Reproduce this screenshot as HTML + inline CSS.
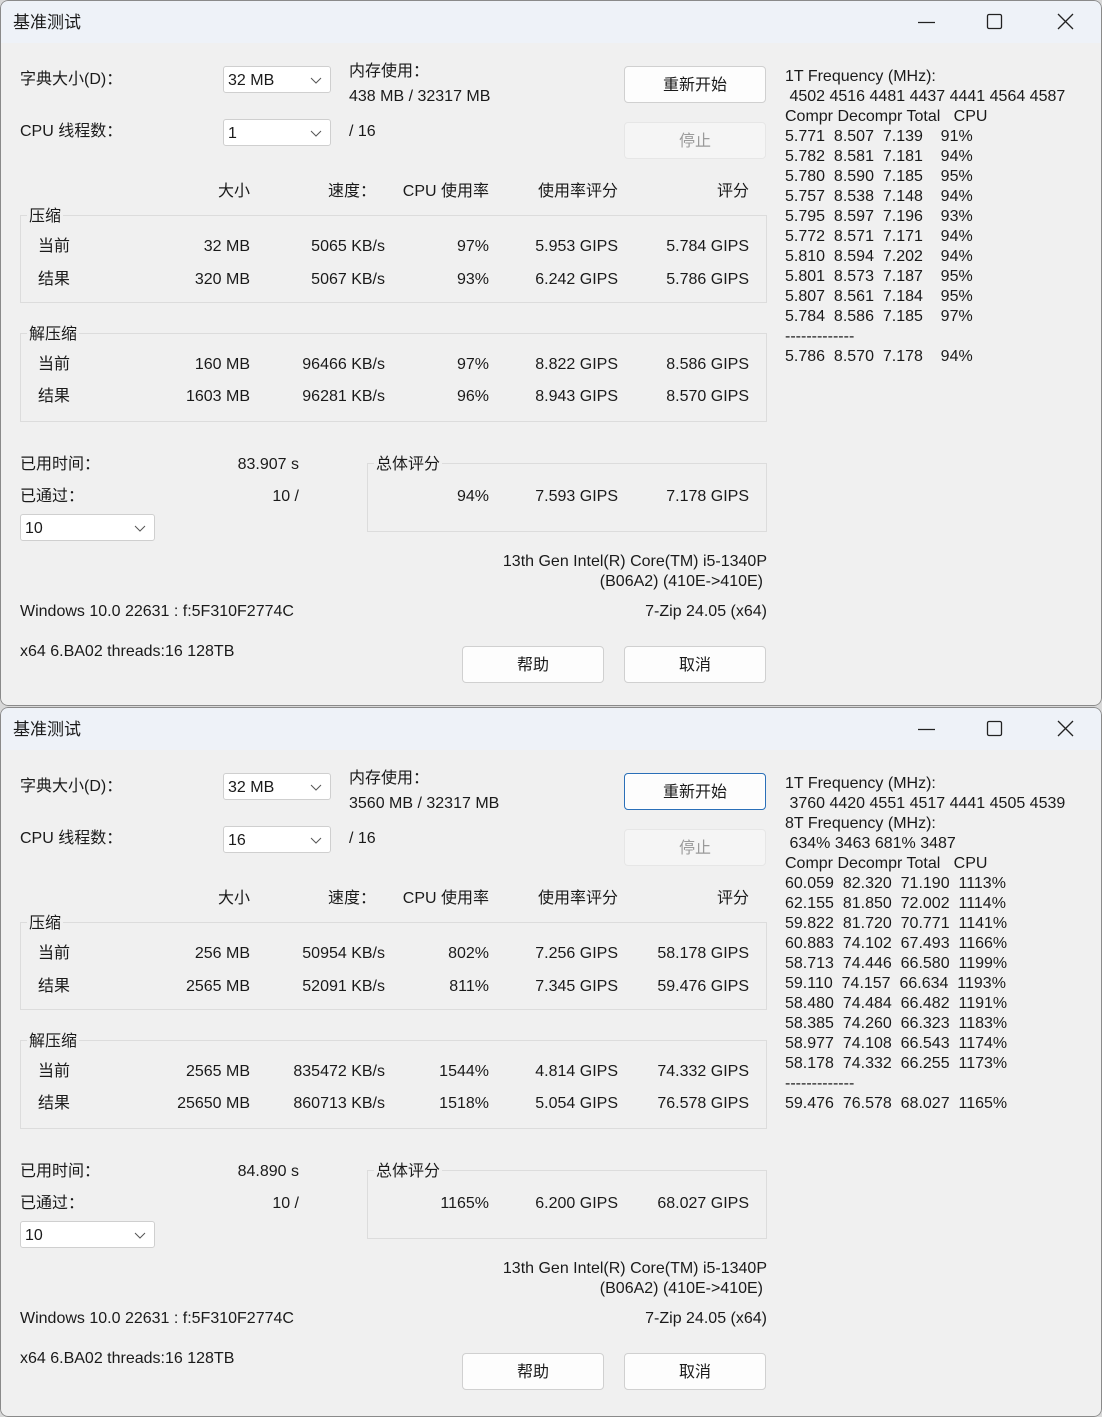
<!DOCTYPE html>
<html><head><meta charset="utf-8">
<style>
*{margin:0;padding:0;box-sizing:border-box}
body{width:1102px;height:1414px;background:#d8d8d8;position:relative;overflow:hidden;font-family:"Liberation Sans","Noto Sans CJK SC",sans-serif;font-size:16px;color:#1a1a1a}
.win{position:absolute;left:0;width:1102px;background:#f0f0f0;border-radius:8px;overflow:hidden}
.win::after{content:"";position:absolute;left:0;top:0;right:0;bottom:0;border:1px solid #8a8a8a;border-radius:8px;pointer-events:none}
.tb{position:absolute;left:0;top:0;width:100%;height:43px;background:#eef2f8}
.t,.r,.col,.gl{margin-top:2px}
.t{position:absolute;line-height:20px;white-space:pre}
.r{position:absolute;line-height:20px;white-space:pre;text-align:right;width:200px}
.title{left:13px;top:11px;font-size:17px}
.combo{position:absolute;background:#fff;border:1px solid #cfcfcf;border-radius:3px;height:27px;line-height:27px;padding-left:4px}
.combo svg{position:absolute;right:8px;top:10px}
.btn{position:absolute;width:142px;height:37px;background:#fdfdfd;border:1px solid #d0d0d0;border-radius:4px;text-align:center;line-height:37px}
.btn.dis{background:#f5f5f5;border-color:#e6e6e6;color:#9a9a9a}
.btn.def{border:1px solid #2a6fb8;box-shadow:inset 0 0 0 1px #fff}
.grp{position:absolute;border:1px solid #dcdcdc}
.gl{position:absolute;background:#f0f0f0;padding:0 2px;line-height:20px}
.ctrl{position:absolute;top:12px}
.col{position:absolute;left:785px;line-height:20px;white-space:pre}
</style></head><body>

<!-- WINDOW 1 -->
<div class="win" style="top:0;height:706px">
<div class="tb"></div>
<div class="t title">基准测试</div>
<svg class="ctrl" style="left:917px" width="20" height="20"><line x1="1" y1="10.5" x2="18" y2="10.5" stroke="#222" stroke-width="1.2"/></svg>
<svg class="ctrl" style="left:985px" width="20" height="20"><rect x="2.5" y="2.5" width="14" height="14" rx="1.5" fill="none" stroke="#222" stroke-width="1.3"/></svg>
<svg class="ctrl" style="left:1056px" width="20" height="20"><path d="M2 2L17 17M17 2L2 17" stroke="#222" stroke-width="1.3"/></svg>

<div class="t" style="left:20px;top:68px">字典大小(D)：</div>
<div class="combo" style="left:223px;top:66px;width:108px">32 MB<svg width="12" height="8"><path d="M1 1L6 6L11 1" fill="none" stroke="#555"/></svg></div>
<div class="t" style="left:349px;top:60px">内存使用：</div>
<div class="t" style="left:349px;top:85px">438 MB / 32317 MB</div>
<div class="btn" style="left:624px;top:66px">重新开始</div>
<div class="t" style="left:20px;top:120px">CPU 线程数：</div>
<div class="combo" style="left:223px;top:119px;width:108px">1<svg width="12" height="8"><path d="M1 1L6 6L11 1" fill="none" stroke="#555"/></svg></div>
<div class="t" style="left:349px;top:120px">/ 16</div>
<div class="btn dis" style="left:624px;top:122px">停止</div>

<div class="r" style="left:50px;top:180px">大小</div>
<div class="r" style="left:176px;top:180px">速度：</div>
<div class="r" style="left:289px;top:180px">CPU 使用率</div>
<div class="r" style="left:418px;top:180px">使用率评分</div>
<div class="r" style="left:549px;top:180px">评分</div>

<div class="grp" style="left:20px;top:215px;width:747px;height:88px"></div>
<div class="gl" style="left:27px;top:205px">压缩</div>
<div class="t" style="left:38px;top:235px">当前</div>
<div class="r" style="left:50px;top:235px">32 MB</div>
<div class="r" style="left:185px;top:235px">5065 KB/s</div>
<div class="r" style="left:289px;top:235px">97%</div>
<div class="r" style="left:418px;top:235px">5.953 GIPS</div>
<div class="r" style="left:549px;top:235px">5.784 GIPS</div>
<div class="t" style="left:38px;top:268px">结果</div>
<div class="r" style="left:50px;top:268px">320 MB</div>
<div class="r" style="left:185px;top:268px">5067 KB/s</div>
<div class="r" style="left:289px;top:268px">93%</div>
<div class="r" style="left:418px;top:268px">6.242 GIPS</div>
<div class="r" style="left:549px;top:268px">5.786 GIPS</div>

<div class="grp" style="left:20px;top:333px;width:747px;height:89px"></div>
<div class="gl" style="left:27px;top:323px">解压缩</div>
<div class="t" style="left:38px;top:353px">当前</div>
<div class="r" style="left:50px;top:353px">160 MB</div>
<div class="r" style="left:185px;top:353px">96466 KB/s</div>
<div class="r" style="left:289px;top:353px">97%</div>
<div class="r" style="left:418px;top:353px">8.822 GIPS</div>
<div class="r" style="left:549px;top:353px">8.586 GIPS</div>
<div class="t" style="left:38px;top:385px">结果</div>
<div class="r" style="left:50px;top:385px">1603 MB</div>
<div class="r" style="left:185px;top:385px">96281 KB/s</div>
<div class="r" style="left:289px;top:385px">96%</div>
<div class="r" style="left:418px;top:385px">8.943 GIPS</div>
<div class="r" style="left:549px;top:385px">8.570 GIPS</div>

<div class="t" style="left:20px;top:453px">已用时间：</div>
<div class="r" style="left:99px;top:453px">83.907 s</div>
<div class="t" style="left:20px;top:485px">已通过：</div>
<div class="r" style="left:99px;top:485px">10 /</div>
<div class="combo" style="left:20px;top:514px;width:135px">10<svg width="12" height="8"><path d="M1 1L6 6L11 1" fill="none" stroke="#555"/></svg></div>

<div class="grp" style="left:367px;top:463px;width:400px;height:69px"></div>
<div class="gl" style="left:374px;top:453px">总体评分</div>
<div class="r" style="left:289px;top:485px">94%</div>
<div class="r" style="left:418px;top:485px">7.593 GIPS</div>
<div class="r" style="left:549px;top:485px">7.178 GIPS</div>

<div class="r" style="left:467px;top:550px;width:300px">13th Gen Intel(R) Core(TM) i5-1340P</div>
<div class="r" style="left:467px;top:570px;width:296px">(B06A2) (410E-&gt;410E)</div>
<div class="t" style="left:20px;top:600px">Windows 10.0 22631 : f:5F310F2774C</div>
<div class="r" style="left:467px;top:600px;width:300px">7-Zip 24.05 (x64)</div>
<div class="t" style="left:20px;top:640px">x64 6.BA02 threads:16 128TB</div>
<div class="btn" style="left:462px;top:646px">帮助</div>
<div class="btn" style="left:624px;top:646px">取消</div>

<div class="col" style="top:65px">1T Frequency (MHz):
 4502 4516 4481 4437 4441 4564 4587
Compr Decompr Total   CPU
5.771  8.507  7.139    91%
5.782  8.581  7.181    94%
5.780  8.590  7.185    95%
5.757  8.538  7.148    94%
5.795  8.597  7.196    93%
5.772  8.571  7.171    94%
5.810  8.594  7.202    94%
5.801  8.573  7.187    95%
5.807  8.561  7.184    95%
5.784  8.586  7.185    97%
-------------
5.786  8.570  7.178    94%</div>
</div>

<!-- WINDOW 2 -->
<div class="win" style="top:707px;height:710px">
<div class="tb"></div>
<div class="t title">基准测试</div>
<svg class="ctrl" style="left:917px" width="20" height="20"><line x1="1" y1="10.5" x2="18" y2="10.5" stroke="#222" stroke-width="1.2"/></svg>
<svg class="ctrl" style="left:985px" width="20" height="20"><rect x="2.5" y="2.5" width="14" height="14" rx="1.5" fill="none" stroke="#222" stroke-width="1.3"/></svg>
<svg class="ctrl" style="left:1056px" width="20" height="20"><path d="M2 2L17 17M17 2L2 17" stroke="#222" stroke-width="1.3"/></svg>

<div class="t" style="left:20px;top:68px">字典大小(D)：</div>
<div class="combo" style="left:223px;top:66px;width:108px">32 MB<svg width="12" height="8"><path d="M1 1L6 6L11 1" fill="none" stroke="#555"/></svg></div>
<div class="t" style="left:349px;top:60px">内存使用：</div>
<div class="t" style="left:349px;top:85px">3560 MB / 32317 MB</div>
<div class="btn def" style="left:624px;top:66px">重新开始</div>
<div class="t" style="left:20px;top:120px">CPU 线程数：</div>
<div class="combo" style="left:223px;top:119px;width:108px">16<svg width="12" height="8"><path d="M1 1L6 6L11 1" fill="none" stroke="#555"/></svg></div>
<div class="t" style="left:349px;top:120px">/ 16</div>
<div class="btn dis" style="left:624px;top:122px">停止</div>

<div class="r" style="left:50px;top:180px">大小</div>
<div class="r" style="left:176px;top:180px">速度：</div>
<div class="r" style="left:289px;top:180px">CPU 使用率</div>
<div class="r" style="left:418px;top:180px">使用率评分</div>
<div class="r" style="left:549px;top:180px">评分</div>

<div class="grp" style="left:20px;top:215px;width:747px;height:88px"></div>
<div class="gl" style="left:27px;top:205px">压缩</div>
<div class="t" style="left:38px;top:235px">当前</div>
<div class="r" style="left:50px;top:235px">256 MB</div>
<div class="r" style="left:185px;top:235px">50954 KB/s</div>
<div class="r" style="left:289px;top:235px">802%</div>
<div class="r" style="left:418px;top:235px">7.256 GIPS</div>
<div class="r" style="left:549px;top:235px">58.178 GIPS</div>
<div class="t" style="left:38px;top:268px">结果</div>
<div class="r" style="left:50px;top:268px">2565 MB</div>
<div class="r" style="left:185px;top:268px">52091 KB/s</div>
<div class="r" style="left:289px;top:268px">811%</div>
<div class="r" style="left:418px;top:268px">7.345 GIPS</div>
<div class="r" style="left:549px;top:268px">59.476 GIPS</div>

<div class="grp" style="left:20px;top:333px;width:747px;height:89px"></div>
<div class="gl" style="left:27px;top:323px">解压缩</div>
<div class="t" style="left:38px;top:353px">当前</div>
<div class="r" style="left:50px;top:353px">2565 MB</div>
<div class="r" style="left:185px;top:353px">835472 KB/s</div>
<div class="r" style="left:289px;top:353px">1544%</div>
<div class="r" style="left:418px;top:353px">4.814 GIPS</div>
<div class="r" style="left:549px;top:353px">74.332 GIPS</div>
<div class="t" style="left:38px;top:385px">结果</div>
<div class="r" style="left:50px;top:385px">25650 MB</div>
<div class="r" style="left:185px;top:385px">860713 KB/s</div>
<div class="r" style="left:289px;top:385px">1518%</div>
<div class="r" style="left:418px;top:385px">5.054 GIPS</div>
<div class="r" style="left:549px;top:385px">76.578 GIPS</div>

<div class="t" style="left:20px;top:453px">已用时间：</div>
<div class="r" style="left:99px;top:453px">84.890 s</div>
<div class="t" style="left:20px;top:485px">已通过：</div>
<div class="r" style="left:99px;top:485px">10 /</div>
<div class="combo" style="left:20px;top:514px;width:135px">10<svg width="12" height="8"><path d="M1 1L6 6L11 1" fill="none" stroke="#555"/></svg></div>

<div class="grp" style="left:367px;top:463px;width:400px;height:69px"></div>
<div class="gl" style="left:374px;top:453px">总体评分</div>
<div class="r" style="left:289px;top:485px">1165%</div>
<div class="r" style="left:418px;top:485px">6.200 GIPS</div>
<div class="r" style="left:549px;top:485px">68.027 GIPS</div>

<div class="r" style="left:467px;top:550px;width:300px">13th Gen Intel(R) Core(TM) i5-1340P</div>
<div class="r" style="left:467px;top:570px;width:296px">(B06A2) (410E-&gt;410E)</div>
<div class="t" style="left:20px;top:600px">Windows 10.0 22631 : f:5F310F2774C</div>
<div class="r" style="left:467px;top:600px;width:300px">7-Zip 24.05 (x64)</div>
<div class="t" style="left:20px;top:640px">x64 6.BA02 threads:16 128TB</div>
<div class="btn" style="left:462px;top:646px">帮助</div>
<div class="btn" style="left:624px;top:646px">取消</div>

<div class="col" style="top:65px">1T Frequency (MHz):
 3760 4420 4551 4517 4441 4505 4539
8T Frequency (MHz):
 634% 3463 681% 3487
Compr Decompr Total   CPU
60.059  82.320  71.190  1113%
62.155  81.850  72.002  1114%
59.822  81.720  70.771  1141%
60.883  74.102  67.493  1166%
58.713  74.446  66.580  1199%
59.110  74.157  66.634  1193%
58.480  74.484  66.482  1191%
58.385  74.260  66.323  1183%
58.977  74.108  66.543  1174%
58.178  74.332  66.255  1173%
-------------
59.476  76.578  68.027  1165%</div>
</div>
</body></html>
